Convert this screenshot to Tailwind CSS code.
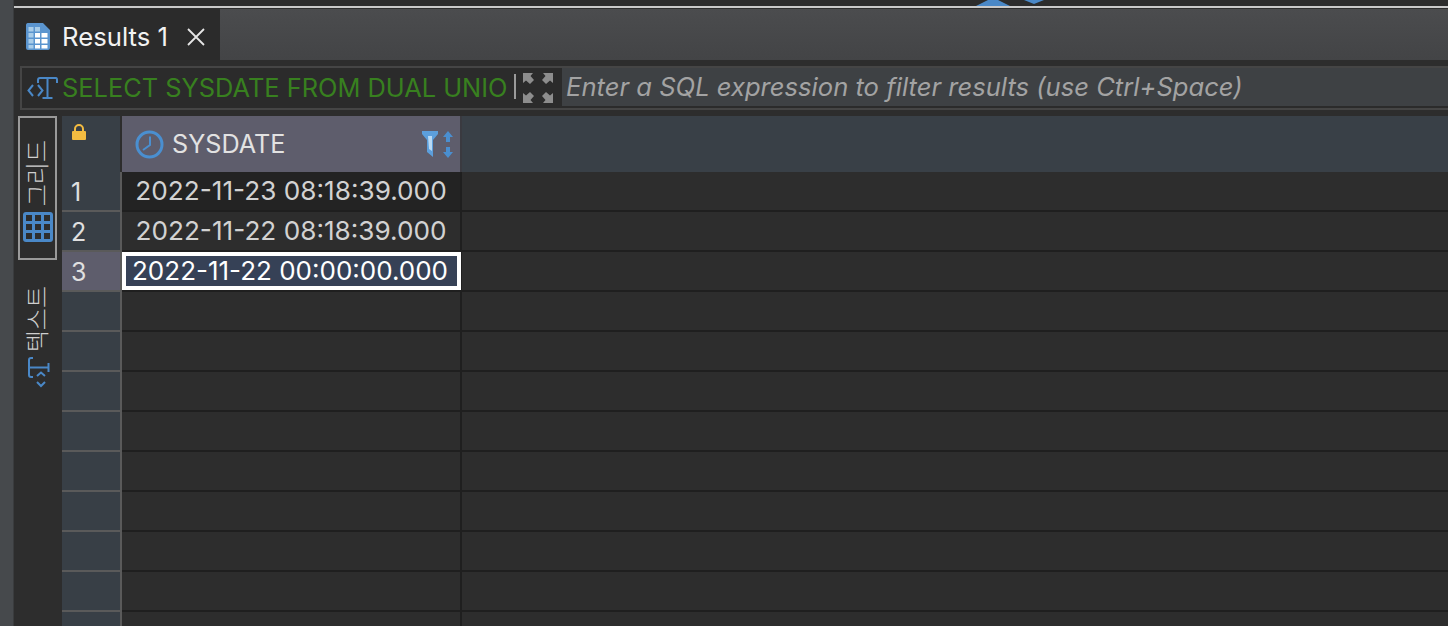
<!DOCTYPE html>
<html lang="en">
<head>
  <meta charset="UTF-8">
  <title>Results 1</title>
  <script src="https://cdn.jsdelivr.net/npm/@tailwindcss/browser@4"></script>
</head>
<body class="w-[1448px] h-[626px] overflow-hidden flex bg-[#2d2d2d] font-['Inter','Noto_Sans_CJK_KR',sans-serif]">
  <!-- left sash -->
  <div class="w-[14px] h-full shrink-0 bg-[#46494c] border-r border-[#3a3c3e]"></div>

  <div class="flex-1 flex flex-col min-w-0">
    <!-- top strip with the bottom of the toolbar icons -->
    <div class="relative h-[6px] bg-[#2c2c2c] shrink-0">
      <svg class="absolute left-[962px] top-0" width="70" height="6" viewBox="0 0 70 6">
        <path d="M0 6 L12 0 H22 L34 6Z" fill="#4a88c7"/>
        <path d="M48 0 H68 L58 4Z" fill="#4a88c7"/>
      </svg>
    </div>
    <div class="h-[2px] bg-[#c9c9c9] shrink-0"></div>

    <!-- tab bar -->
    <div class="h-[52px] shrink-0 flex bg-gradient-to-b from-[#4b4c4e] to-[#434446] border-t border-[#2d2d2d]">
      <div class="w-[206px] bg-[#2b2b2b] flex items-center pl-[11px] pt-[5px]">
        <svg class="-mt-[2px]" width="26" height="29" viewBox="0 0 26 29">
          <path d="M2.500 1 H18 L25 8 V26 a2 2 0 0 1 -2 2 H3 a2 2 0 0 1 -2 -2 V3 a2 2 0 0 1 1.500 -2Z" fill="#5b95cf"/>
          <g fill="#a9cde9">
            <rect x="3.500" y="5" width="5" height="4.500"/><rect x="10" y="5" width="5" height="4.500"/>
            <rect x="3.500" y="11" width="5" height="4.500"/><rect x="3.500" y="17" width="5" height="4.500"/><rect x="3.500" y="23" width="5" height="3.500"/>
          </g>
          <g fill="#ffffff">
            <rect x="10" y="11" width="5" height="4.500"/><rect x="16.500" y="11" width="6" height="4.500"/>
            <rect x="10" y="17" width="5" height="4.500"/><rect x="16.500" y="17" width="6" height="4.500"/>
            <rect x="10" y="23" width="5" height="3.500"/><rect x="16.500" y="23" width="6" height="3.500"/>
          </g>
        </svg>
        <span class="ml-[11px] text-[25.7px] leading-none text-[#f2f2f2] whitespace-nowrap">Results 1</span>
        <svg class="ml-[19px] -mt-[1px]" width="18" height="18" viewBox="0 0 18 18"><path d="M1 1 L17 17 M17 1 L1 17" stroke="#e6e6e6" stroke-width="1.800"/></svg>
      </div>
    </div>

    <!-- filter bar -->
    <div class="h-[56px] shrink-0 flex items-stretch py-[6px] pl-[6px] bg-[#2d2d2d]">
      <div class="w-[542px] flex items-center border-[2px] border-r-0 border-[#454545] bg-[#2b2b2b] pl-[5px]">
        <svg width="31" height="22" viewBox="0 0 31 22" class="shrink-0">
          <path d="M6 8 L1.500 13.500 L6 19 M11 8 L15.500 13.500 L11 19" fill="none" stroke="#4a88c7" stroke-width="2"/>
          <path d="M11 6 V3 Q11 1 13 1 H29 Q30 1 30 3 V6 M20.500 1 V20.500 M15.500 21 H25.500" fill="none" stroke="#4a88c7" stroke-width="2"/>
        </svg>
        <span class="ml-[4px] w-[446px] text-[25.4px] leading-none text-[#38801f] whitespace-nowrap">SELECT SYSDATE FROM DUAL UNIO</span>
        <div class="ml-[6px] w-[2px] h-[25px] bg-[#9a9a9a] -mt-[3px]"></div>
        <svg class="ml-[7px] shrink-0 -mt-[1px]" width="30" height="30" viewBox="0 0 30 30">
          <g fill="#8d8d8d">
            <path d="M0 0 H10 L7.500 3 L11 7 L7 11 L3 7.500 L0 10Z"/>
            <path d="M30 0 H20 L22.500 3 L19 7 L23 11 L27 7.500 L30 10Z"/>
            <path d="M0 30 H10 L7.500 27 L11 23 L7 19 L3 22.500 L0 20Z"/>
            <path d="M30 30 H20 L22.500 27 L19 23 L23 19 L27 22.500 L30 20Z"/>
          </g>
        </svg>
      </div>
      <div class="flex-1 border-y-[2px] border-[#454545] pb-[2px] bg-[#2b2b2b]">
        <div class="h-full flex items-center bg-[#3e4144] pl-[4px]">
          <span class="text-[25.6px] leading-none italic text-[#a3a3a3] whitespace-nowrap">Enter a SQL expression to filter results (use Ctrl+Space)</span>
        </div>
      </div>
    </div>

    <!-- results area -->
    <div class="flex-1 flex min-h-0">
      <!-- vertical tabs -->
      <div class="w-[48px] shrink-0 pl-[4px] flex flex-col">
        <div class="w-[39px] h-[144px] border-[2px] border-[#9a9a9a] flex flex-col items-center justify-end pb-[16px]">
          <span class="[writing-mode:vertical-rl] [text-orientation:sideways] rotate-180 text-[24px] leading-none font-light text-[#cfcfcf]">그리드</span>
          <svg class="mt-[6px]" width="30" height="30" viewBox="0 0 30 30">
            <rect width="30" height="30" rx="3" fill="#4a88c7"/>
            <g fill="#2d2d2d">
              <rect x="3" y="3" width="6" height="6"/><rect x="12" y="3" width="6" height="6"/><rect x="21" y="3" width="6" height="6"/>
              <rect x="3" y="12" width="6" height="6"/><rect x="12" y="12" width="6" height="6"/><rect x="21" y="12" width="6" height="6"/>
              <rect x="3" y="21" width="6" height="6"/><rect x="12" y="21" width="6" height="6"/><rect x="21" y="21" width="6" height="6"/>
            </g>
          </svg>
        </div>
        <div class="w-[39px] flex flex-col items-center mt-[26px]">
          <span class="[writing-mode:vertical-rl] [text-orientation:sideways] rotate-180 text-[24px] leading-none font-light text-[#cfcfcf]">텍스트</span>
          <svg class="mt-[5px] ml-[3px]" width="22" height="31" viewBox="0 0 22 31">
            <g fill="none" stroke="#4a88c7" stroke-width="2">
              <path d="M5 1 H3 Q1 1 1 3 V18 Q1 20 3 20 H5 M1 10.500 H20 M20.500 6 V15"/>
              <path d="M9 19 L13 15.500 L17 19 M9 25 L13 29 L17 25"/>
            </g>
          </svg>
        </div>
      </div>

      <!-- grid -->
      <div id="grid" class="flex-1 min-w-0 flex flex-col">
        <div class="h-[56px] shrink-0 flex">
          <div class="w-[58px] shrink-0 bg-[#383f46] pl-[10px] pt-[8px]">
            <svg width="14" height="17" viewBox="0 0 14 17"><path d="M3 8 V5 a4 4 0 0 1 8 0 V8" fill="none" stroke="#f4bc41" stroke-width="2"/><rect y="7" width="14" height="9" rx="1" fill="#f4bc41"/></svg>
          </div>
          <div class="w-[340px] shrink-0 ml-[2px] bg-[#5e5d6c] border-r-[2px] border-[#3a3a40] flex items-center pl-[13px] relative">
            <svg width="29" height="29" viewBox="0 0 29 29"><circle cx="14.500" cy="14.500" r="12.500" fill="none" stroke="#4a8fd0" stroke-width="3"/><path d="M15 6.500 V15 L8 20" fill="none" stroke="#4a8fd0" stroke-width="2"/></svg>
            <span class="ml-[8px] mt-[1px] text-[25.2px] leading-none text-[#e2e2e2]">SYSDATE</span>
            <svg class="absolute right-[6px] top-[15px]" width="32" height="28" viewBox="0 0 32 28">
              <path d="M0 0 H16 V3 L11 9 V26 L5 21 V9 L0 3Z" fill="#5c9fdc"/>
              <path d="M6 5 H10 V20 L7 18Z" fill="#b8d9f4"/>
              <path d="M26 0 L31 6 H28 V11 H24 V6 H21Z M24 16 H28 V21 H31 L26 27 L21 21 H24Z" fill="#4a8fd0"/>
            </svg>
          </div>
          <div class="flex-1 bg-[#394047]"></div>
        </div>
      </div>
    </div>
  </div>

  <script>
    const rows = [
      ['1', '2022-11-23 08:18:39.000'],
      ['2', '2022-11-22 08:18:39.000'],
      ['3', '2022-11-22 00:00:00.000'],
      ['', ''], ['', ''], ['', ''], ['', ''], ['', ''], ['', ''], ['', ''], ['', ''], ['', '']
    ];
    const grid = document.getElementById('grid');
    rows.forEach((r, i) => {
      const head = i === 2 ? 'bg-[#5e5d6c]' : 'bg-[#383f46]';
      let cell;
      if (i === 2) {
        cell = `<div class="w-[340px] shrink-0 bg-[#1f1f1f] pr-[1px] pb-[2px]"><div class="h-full bg-[#364156] border-[4px] border-white flex items-center justify-center pr-[3px] text-[26px] leading-none text-white">${r[1]}</div></div>`;
      } else {
        cell = `<div class="w-[340px] shrink-0 border-r-[2px] border-b-[2px] border-[#1f1f1f] flex items-center justify-center text-[26.2px] leading-none text-[#d2d2d2] ${i === 0 ? 'bg-[#232323]' : 'bg-[#2d2d2d]'}">${r[1]}</div>`;
      }
      grid.insertAdjacentHTML('beforeend', `
        <div class="h-[40px] shrink-0 flex">
          <div class="w-[60px] shrink-0 ${head} border-r-[2px] border-b-[2px] border-[#5a5a5a] flex items-center pl-[9px] pt-[2px] text-[25px] leading-none text-[#e0e0e0]">${r[0]}</div>
          ${cell}
          <div class="flex-1 border-b-[2px] border-[#1f1f1f] bg-[#2d2d2d]"></div>
        </div>`);
    });
  </script>
</body>
</html>
